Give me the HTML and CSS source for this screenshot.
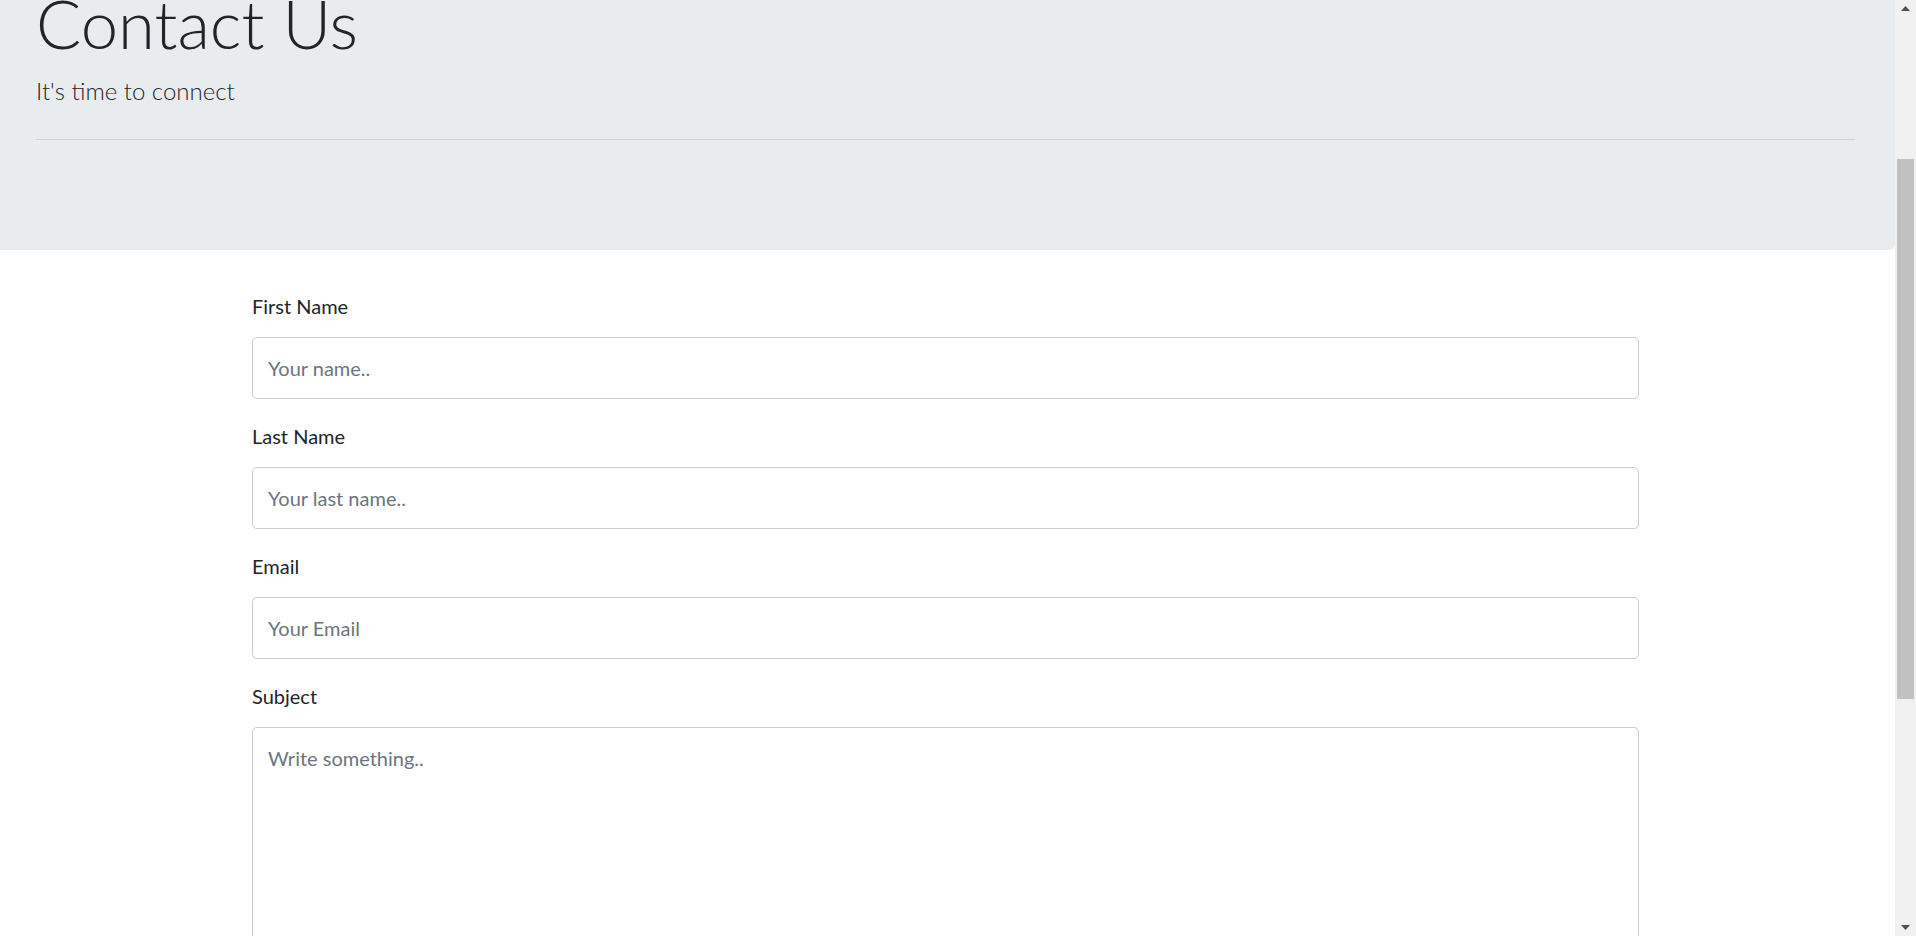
FILE: index.html
```html
<!DOCTYPE html>
<html lang="en">
<head>
    <meta charset="UTF-8">
    <meta name="viewport" content="width=device-width, initial-scale=1.0">
    <title>Contact Us</title>
    <link rel="stylesheet" href="styles.css">
</head>
<body>
    <div class="jumbotron">
        <h1 class="display-title">Contact Us</h1>
        <p class="lead">It's time to connect</p>
        <hr class="divider">
    </div>

    <div class="contact-form">
        <form>
            <label for="fname">First Name</label>
            <input type="text" id="fname" name="firstname" placeholder="Your name..">

            <label for="lname">Last Name</label>
            <input type="text" id="lname" name="lastname" placeholder="Your last name..">

            <label for="email">Email</label>
            <input type="text" id="email" name="email" placeholder="Your Email">

            <label for="subject">Subject</label>
            <textarea id="subject" name="subject" placeholder="Write something.."></textarea>
        </form>
    </div>

    
    <div class="scrollbar" aria-hidden="true">
        <div class="scroll-btn">
            <svg width="9" height="5" viewBox="0 0 9 5"><path d="M0 5L4.5 0L9 5Z" fill="#505050"/></svg>
        </div>
        <div class="scroll-track">
            <div class="scroll-thumb"></div>
        </div>
        <div class="scroll-btn">
            <svg width="9" height="5" viewBox="0 0 9 5"><path d="M0 0L4.5 5L9 0Z" fill="#505050"/></svg>
        </div>
    </div>

    <script src="script.js"></script>
</body>
</html>
```

FILE: styles.css
```css
body {
    margin: 0 21px 0 0;
    font-family: Lato, "Open Sans", sans-serif;
    color: #212529;
    background-color: #fff;
}
.jumbotron {
    padding: 227px 40px 110px 36px;
    margin-bottom: 41px;
    background-color: #e9ecef;
    border-radius: 0 0 6px 0;
}
.display-title {
    margin: 0 0 7px;
    font-size: 67px;
    font-weight: 300;
    line-height: 84px;
}
.lead {
    margin: 0 0 29px;
    font-size: 24px;
    font-weight: 300;
    line-height: 38px;
}
.divider {
    margin: 0;
    border: 0;
    border-top: 1px solid rgba(0, 0, 0, 0.1);
}
.contact-form {
    width: 1387px;
    margin: 0 auto;
    padding: 0 4px 342px 0;
}
.contact-form label {
    display: block;
    margin-bottom: 16px;
    font-size: 20px;
    line-height: 30px;
}
.contact-form input,
.contact-form textarea {
    display: block;
    width: 100%;
    box-sizing: border-box;
    margin: 0 0 22px;
    padding: 15px;
    font-family: inherit;
    font-size: 20px;
    line-height: 30px;
    color: #495057;
    border: 1px solid #ccc;
    border-radius: 5px;
    resize: vertical;
}
.contact-form textarea {
    height: 250px;
}
.contact-form input::placeholder,
.contact-form textarea::placeholder {
    color: #6c757d;
}
.scrollbar {
    position: fixed;
    top: 0;
    right: 0;
    bottom: 0;
    width: 21px;
    display: flex;
    flex-direction: column;
    background-color: #f1f1f1;
}
.scroll-btn {
    height: 17px;
    display: flex;
    align-items: center;
    justify-content: center;
}
.scroll-track {
    flex: 1;
    padding: 142px 2px 0;
}
.scroll-thumb {
    height: 540px;
    background-color: #c1c1c1;
}
```

FILE: script.js
```js
window.scrollTo(0, 246);
```
